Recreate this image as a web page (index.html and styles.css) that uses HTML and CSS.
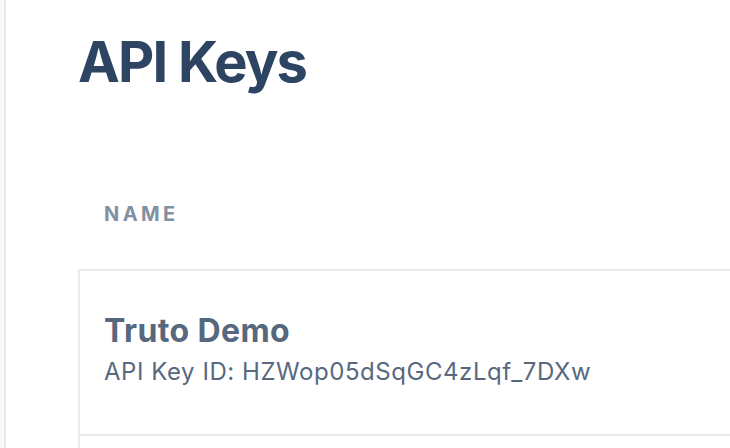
FILE: index.html
```html
<!DOCTYPE html>
<html>
<head>
<meta charset="utf-8">
<link rel="stylesheet" href="styles.css">
</head>
<body>
<div class="layout">
  <div class="rail"></div>
  <main class="main">
    <h1 class="title">API Keys</h1>
    <div class="col-head">NAME</div>
    <div class="table">
      <div class="row">
        <div class="key-name">Truto Demo</div>
        <div class="key-id">API Key ID: HZWop05dSqGC4zLqf_7DXw</div>
      </div>
      <div class="row"></div>
    </div>
  </main>
</div>
</body>
</html>
```
FILE: styles.css
```css
html, body {
  margin: 0;
  padding: 0;
  background: #ffffff;
  font-family: Inter, "Noto Sans", sans-serif;
  overflow: hidden;
}
.layout {
  display: flex;
  height: 448px;
  overflow: hidden;
}
.rail {
  width: 4px;
  flex: none;
  background: #f9f9fa;
  border-right: 2px solid #e9e9ef;
}
.main {
  flex: 1;
  padding-left: 72px;
  padding-top: 28px;
  min-width: 0;
}
.title {
  margin: 0;
  font-size: 56px;
  line-height: 68px;
  font-weight: 700;
  color: #2d4462;
  letter-spacing: -1.8px;
}
.col-head {
  margin-top: 106px;
  padding-left: 26px;
  font-size: 20px;
  line-height: 24px;
  font-weight: 700;
  letter-spacing: 3.4px;
  color: #8290a1;
}
.table {
  margin-top: 43px;
  border-top: 2px solid #e9e9ef;
  border-left: 2px solid #e9e9ef;
  margin-right: -20px;
}
.row {
  padding: 41px 24px 0;
  height: 165px;
  box-sizing: border-box;
  border-bottom: 2px solid #e9e9ef;
}
.key-name {
  font-size: 32px;
  line-height: 38px;
  font-weight: 700;
  letter-spacing: 0.4px;
  color: #56677e;
}
.key-id {
  margin-top: 7px;
  font-size: 24px;
  line-height: 30px;
  font-weight: 400;
  letter-spacing: 0.55px;
  color: #58697f;
}
```
